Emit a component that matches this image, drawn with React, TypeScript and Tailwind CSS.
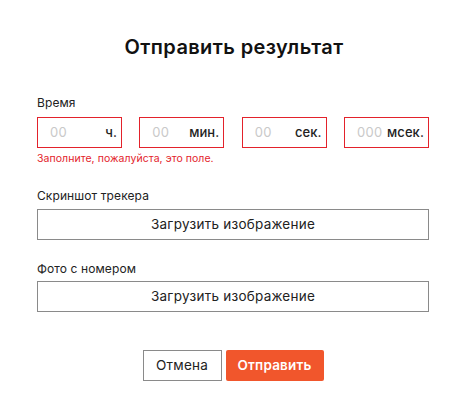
import React from "react";

const font = { fontFamily: "Inter, 'Open Sans', sans-serif" };

function TimeBox({ ph, unit }: { ph: string; unit: string }) {
  return (
    <div className="flex h-[31px] w-[85px] items-center justify-between border border-[#e3222b] pl-[12px] pr-[4px]">
      <span className="text-[13px] tracking-[0.3px] text-[#c9c9c9]">{ph}</span>
      <span className="text-[13px] font-medium tracking-[0.1px] text-[#222]">{unit}</span>
    </div>
  );
}

function Upload() {
  return (
    <div className="flex h-[31px] w-full items-center justify-center border border-[#8a8a8a] text-[13.5px] tracking-[0.25px] text-[#222]">
      Загрузить изображение
    </div>
  );
}

export default function App() {
  return (
    <div className="h-[416px] w-[464px] bg-white" style={font}>
      <div className="flex flex-col pl-[37px] pr-[35px] pt-[35px]">
        <h1 className="pl-[2px] text-center text-[20px] font-semibold leading-[24px] tracking-[0.4px] text-[#111]">Отправить результат</h1>
        <div className="mt-[37px] text-[12px] leading-[14px] tracking-[0.1px] text-[#222]">Время</div>
        <div className="mt-[7px] flex justify-between">
          <TimeBox ph="00" unit="ч." />
          <TimeBox ph="00" unit="мин." />
          <TimeBox ph="00" unit="сек." />
          <TimeBox ph="000" unit="мсек." />
        </div>
        <div className="mt-[5px] text-[10.5px] leading-[12px] tracking-[0.05px] text-[#e3222b]">Заполните, пожалуйста, это поле.</div>
        <div className="mt-[24px] text-[12px] leading-[14px] tracking-[0.1px] text-[#222]">Скриншот трекера</div>
        <div className="mt-[6px]"><Upload /></div>
        <div className="mt-[22px] text-[12px] leading-[14px] tracking-[0.1px] text-[#222]">Фото с номером</div>
        <div className="mt-[5px]"><Upload /></div>
        <div className="mt-[38px] flex justify-center gap-[4px]">
          <div className="flex h-[31px] w-[79px] items-center justify-center border border-[#8a8a8a] text-[13.5px] tracking-[0.2px] text-[#222]">Отмена</div>
          <div className="flex h-[31px] w-[98px] items-center justify-center rounded-[2px] bg-[#f1562c] text-[13.5px] font-semibold tracking-[0.2px] text-white">Отправить</div>
        </div>
      </div>
    </div>
  );
}
